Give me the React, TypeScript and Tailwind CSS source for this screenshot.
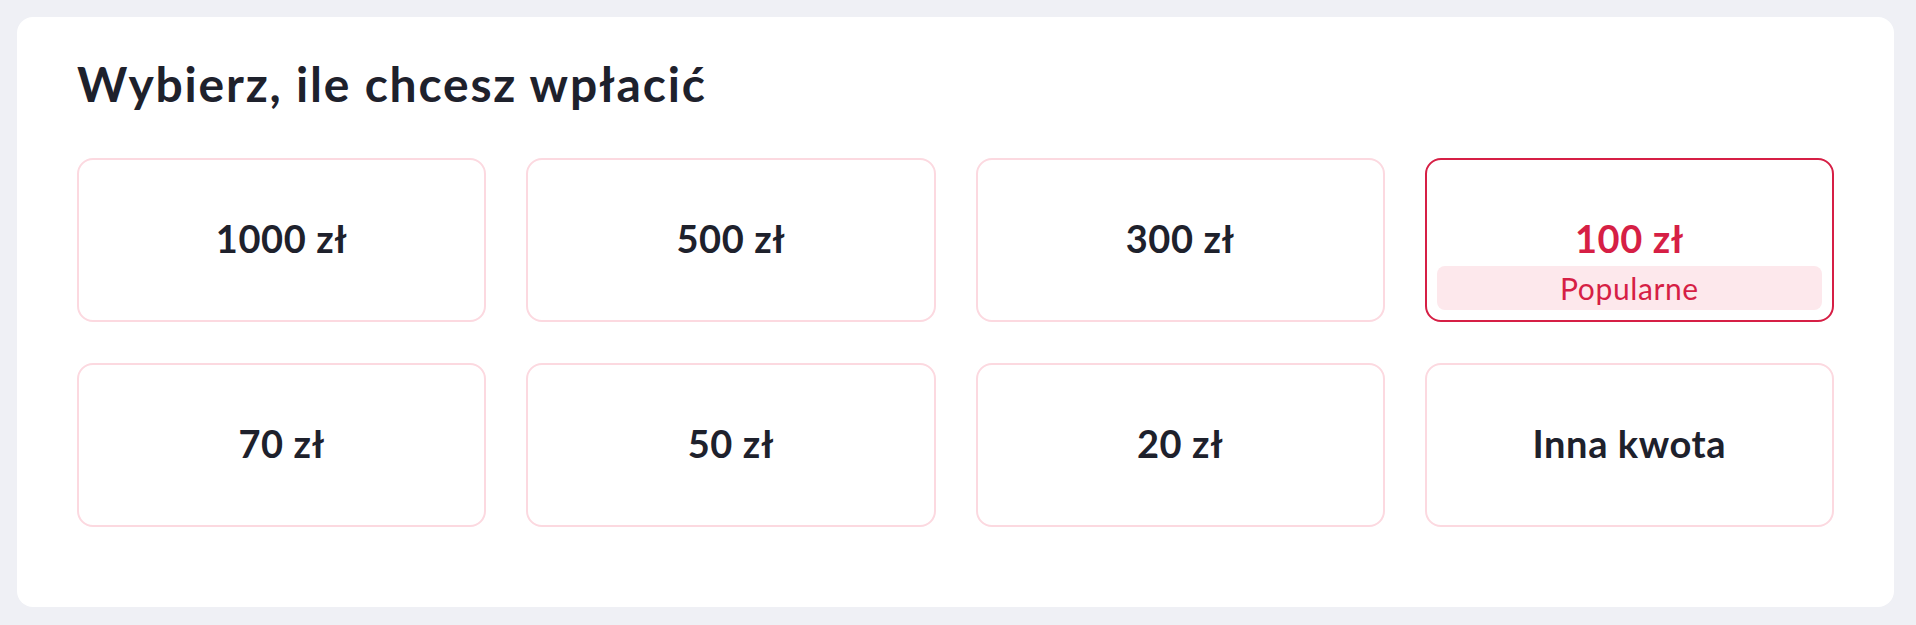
import React from "react";

const amounts = [
  { label: "1000 zł" },
  { label: "500 zł" },
  { label: "300 zł" },
  { label: "100 zł", selected: true },
  { label: "70 zł" },
  { label: "50 zł" },
  { label: "20 zł" },
  { label: "Inna kwota" },
];

export default function App() {
  return (
    <div
      className="h-[625px] w-full bg-[#eff0f5] pt-[17px] pb-[18px] pl-[17px] pr-[22px]"
      style={{ fontFamily: "Lato, 'Noto Sans', sans-serif" }}
    >
      <div className="flex h-full flex-col rounded-2xl bg-white px-[60px] pt-[38px]">
        <h1 className="text-[48px] font-bold leading-[58px] tracking-[1.8px] text-[#1e212c]">
          Wybierz, ile chcesz wpłacić
        </h1>
        <div className="mt-[45px] grid grid-cols-4 gap-x-[40px] gap-y-[41px]">
          {amounts.map((a) =>
            a.selected ? (
              <button
                key={a.label}
                className="relative flex h-[164px] items-center justify-center rounded-2xl border-2 border-[#d61f45] bg-white pb-[4px]"
              >
                <span className="text-[38px] font-bold tracking-[0.6px] text-[#d61f45]">
                  {a.label}
                </span>
                <span className="absolute bottom-[10px] left-[10px] right-[10px] flex h-[44px] items-center justify-center rounded-lg bg-[#fde8ec] text-[30px] tracking-[0.6px] text-[#d61f45]">
                  Popularne
                </span>
              </button>
            ) : (
              <button
                key={a.label}
                className="flex h-[164px] items-center justify-center rounded-2xl border-2 border-[#fcd9e0] bg-white pb-[4px]"
              >
                <span className="text-[38px] font-bold tracking-[0.6px] text-[#1e212c]">
                  {a.label}
                </span>
              </button>
            )
          )}
        </div>
      </div>
    </div>
  );
}
